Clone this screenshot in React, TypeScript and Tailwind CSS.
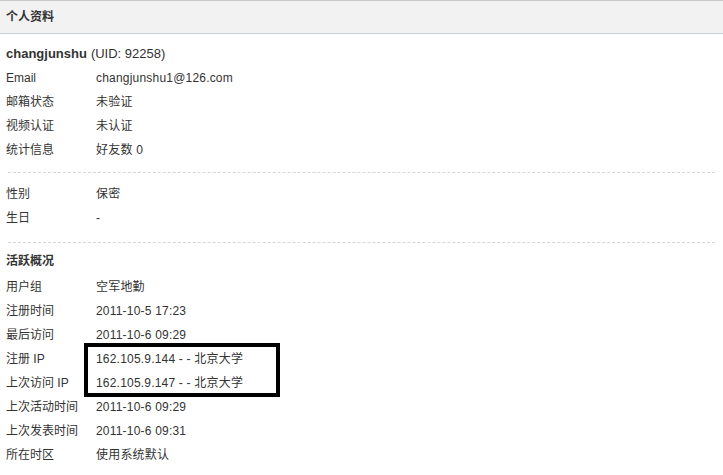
const basicRows = [
  { label: 'Email', value: 'changjunshu1@126.com' },
  { label: '邮箱状态', value: '未验证' },
  { label: '视频认证', value: '未认证' },
  { label: '统计信息', value: '好友数 0' },
]

const privateRows = [
  { label: '性别', value: '保密' },
  { label: '生日', value: '-' },
]

const activityTop = [
  { label: '用户组', value: '空军地勤' },
  { label: '注册时间', value: '2011-10-5 17:23' },
  { label: '最后访问', value: '2011-10-6 09:29' },
]

const ipRows = [
  { label: '注册 IP', value: '162.105.9.144 - - 北京大学' },
  { label: '上次访问 IP', value: '162.105.9.147 - - 北京大学' },
]

const activityBottom = [
  { label: '上次活动时间', value: '2011-10-6 09:29' },
  { label: '上次发表时间', value: '2011-10-6 09:31' },
  { label: '所在时区', value: '使用系统默认' },
]

const Row = ({ label, value }: { label: string; value: string }) => (
  <div className="flex h-[24px] items-center">
    <span className="w-[90px] shrink-0">{label}</span>
    <span className="tracking-[0.2px]">{value}</span>
  </div>
)

const Dashed = () => <div className="ml-[2px] mr-[2px] border-t border-dashed border-[#d6d6d6]" />

export default function App() {
  return (
    <div
      className="h-[475px] w-[723px] overflow-hidden bg-white text-[12px] text-[#333]"
      style={{ fontFamily: '"Liberation Sans", "Noto Sans CJK SC", sans-serif' }}
    >
      <div className="flex h-[34px] items-center border-t border-b border-t-[#c8c8c8] border-b-[#c9d0d8] bg-[#f2f2f2] px-[6px] font-bold">
        个人资料
      </div>

      <div className="px-[6px]">
        <div className="mt-[8px] flex h-[24px] items-center text-[13px]">
          <span className="font-bold">changjunshu</span>
          <span className="ml-[4px]">(UID: 92258)</span>
        </div>

        <div>
          {basicRows.map((r) => (
            <Row key={r.label} {...r} />
          ))}
        </div>

        <div className="mt-[10px]">
          <Dashed />
        </div>

        <div className="mt-[9px]">
          {privateRows.map((r) => (
            <Row key={r.label} {...r} />
          ))}
        </div>

        <div className="mt-[12px]">
          <Dashed />
        </div>

        <div className="mt-[6px] flex h-[24px] items-center font-bold">活跃概况</div>

        <div className="mt-[2px]">
          {activityTop.map((r) => (
            <Row key={r.label} {...r} />
          ))}
          <div className="relative">
            {ipRows.map((r) => (
              <Row key={r.label} {...r} />
            ))}
            <div className="absolute left-[78px] top-[-4px] h-[54px] w-[196px] border-4 border-black" />
          </div>
          {activityBottom.map((r) => (
            <Row key={r.label} {...r} />
          ))}
        </div>
      </div>
    </div>
  )
}
